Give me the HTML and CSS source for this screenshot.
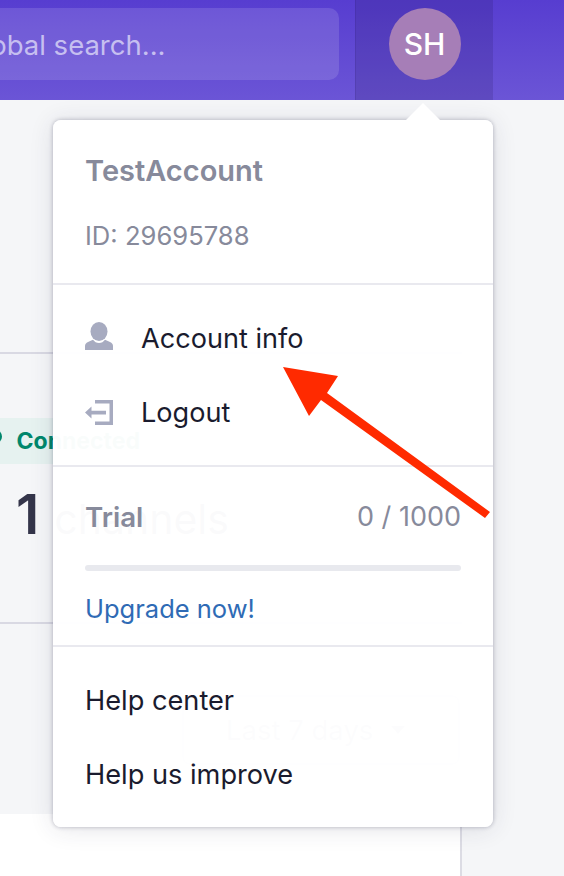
FILE: index.html
```html
<!DOCTYPE html>
<html lang="en">
<head>
<meta charset="utf-8">
<title>Account menu</title>
<link rel="stylesheet" href="styles.css">
</head>
<body>
<div class="page">
  <header class="topbar">
    <div class="search">Global search...</div>
    <div class="account"><div class="avatar">SH</div></div>
  </header>
  <main class="content">
    <section class="panel panel-status">
      <div class="badge"><span class="dot"></span>Connected</div>
      <div class="stat"><span class="stat-prev">5</span><strong>1</strong><span class="stat-label">channels</span></div>
    </section>
    <section class="panel panel-range">
      <div class="range">Last 7 days <span class="caret"></span></div>
    </section>
    <section class="panel-white"></section>
  </main>

  <div class="menu">
    <span class="menu-tip"></span>
    <div class="menu-section menu-head">
      <div class="name">TestAccount</div>
      <div class="muted">ID: 29695788</div>
    </div>
    <div class="menu-section menu-links">
      <a class="item">
        <svg class="icon icon-person" viewBox="0 0 28 28"><ellipse cx="14" cy="9.500" rx="8.500" ry="9.500"/><path d="M0 28v-4c0-2 1-3 3-4l5-2.300c1.500 2 3.500 3.300 6 3.300s4.500-1.300 6-3.300l5 2.300c2 1 3 2 3 4v4z"/></svg>
        Account info
      </a>
      <a class="item">
        <svg class="icon icon-logout" viewBox="0 0 28 25"><path d="M10 0h18v25H10v-3.500h14.500v-18H10z"/><path d="M0 12.500 6.500 6.500v4.200H21v3.800H6.500v4z"/></svg>
        Logout
      </a>
    </div>
    <div class="menu-section menu-plan">
      <div class="plan-row"><strong>Trial</strong><span>0 / 1000</span></div>
      <div class="progress"></div>
      <a class="upgrade">Upgrade now!</a>
    </div>
    <div class="menu-section menu-help">
      <a class="help">Help center</a>
      <a class="help">Help us improve</a>
    </div>
  </div>

  <svg class="annotation" viewBox="0 0 564 876"><path d="M283 367 338 376 327 393 490 512 485 518 321 400 309 416z"/></svg>
</div>
</body>
</html>
```

FILE: styles.css
```css
* { box-sizing: border-box; }
html, body { margin: 0; padding: 0; }
body {
  width: 564px;
  height: 876px;
  overflow: hidden;
  background: #f5f6f8;
  font-family: Inter, "Noto Sans", sans-serif;
  color: #1a1b2e;
}
.page { position: relative; width: 564px; height: 876px; overflow: hidden; }

.topbar {
  display: flex;
  align-items: stretch;
  height: 100px;
  background: linear-gradient(180deg, #573dd0 0%, #6b55d6 100%);
}
.search {
  width: 439px;
  height: 72px;
  margin: 8px 16px 0 -100px;
  padding-left: 63px;
  border-radius: 10px;
  background: rgba(255, 255, 255, 0.13);
  color: #c6bff0;
  font-size: 27.5px;
  line-height: 75px;
  white-space: nowrap;
}
.account {
  width: 138px;
  display: flex;
  justify-content: center;
  padding-top: 8px;
  background: rgba(30, 20, 80, 0.16);
  border-left: 1px solid rgba(30, 20, 80, 0.12);
}
.avatar {
  width: 72px;
  height: 72px;
  border-radius: 50%;
  background: #a67eb7;
  color: #fff;
  font-size: 30px;
  font-weight: 500;
  line-height: 72px;
  text-align: center;
}

.content { width: 462px; }
.panel { border-top: 2px solid #d9d9e3; }
.panel-status { height: 270px; margin-top: 252px; padding-top: 64px; }
.badge {
  display: flex;
  align-items: center;
  gap: 15px;
  height: 46px;
  width: 150px;
  margin-left: -10px;
  background: #e6f2f0;
  color: #00876c;
  font-size: 23px;
  font-weight: 700;
}
.dot { width: 13px; height: 13px; border-radius: 50%; background: #00876c; margin-top: -10px; }
.stat { display: flex; align-items: baseline; margin: 17px 0 0 -33px; font-size: 55px; line-height: 66px; color: #34354a; }
.stat strong { margin-left: 15px; font-weight: 600; }
.stat-prev { width: 34px; font-weight: 600; }
.stat-label { margin-left: 15px; font-size: 41px; font-weight: 400; }
.panel-range { height: 192px; padding: 71px 0 0 182px; }
.range {
  display: flex;
  align-items: center;
  gap: 18px;
  width: 278px;
  height: 70px;
  padding-left: 42px;
  border: 2px solid #d9d9e3;
  border-radius: 8px;
  background: #fff;
  color: #8a8da0;
  font-size: 27.5px;
}
.caret { border: 7px solid transparent; border-top: 8px solid #8a8da0; border-bottom: 0; }
.panel-white {
  height: 63px;
  background: #fff;
  border-right: 2px solid #dcdce4;
}

.menu {
  position: absolute;
  left: 53px;
  top: 120px;
  width: 440px;
  height: 707px;
  border-radius: 8px;
  background: rgba(255, 255, 255, 0.975);
  box-shadow: 0 0 4px rgba(40, 40, 70, 0.32), 0 2px 24px rgba(40, 40, 70, 0.12);
}
.menu-tip {
  position: absolute;
  left: 353px;
  top: -17px;
  width: 0;
  height: 0;
  border: 17px solid transparent;
  border-top: 0;
  border-bottom-color: #fff;
}
.menu-section { padding: 0 32px; border-bottom: 2px solid #e9e9ef; }
.menu-section:last-child { border-bottom: 0; }
.menu-head { height: 165px; padding-top: 31px; }
.name { font-size: 29px; font-weight: 600; line-height: 40px; color: #878a9b; }
.muted { margin-top: 26px; font-size: 25.6px; line-height: 38px; color: #878a9b; }
.menu-links { height: 182px; padding-top: 27px; display: flex; flex-direction: column; gap: 22px; }
.item { display: flex; align-items: center; gap: 28px; height: 52px; font-size: 27.1px; }
.icon { width: 28px; height: 28px; fill: #a7abc0; flex: none; }
.icon-person { margin-top: -4px; }
.icon-logout { height: 25px; }
.menu-plan { height: 180px; padding-top: 30px; }
.plan-row { display: flex; justify-content: space-between; font-size: 27px; line-height: 40px; color: #878a9b; }
.plan-row strong { font-size: 27.7px; font-weight: 600; }
.progress { height: 6px; margin-top: 28px; border-radius: 3px; background: #e8e9ee; }
.upgrade { display: block; margin-top: 18px; font-size: 25.5px; line-height: 40px; color: #2f6bb5; }
.menu-help { padding-top: 34px; }
.help { display: block; font-size: 27.2px; line-height: 40px; margin-bottom: 34px; }

.annotation { position: absolute; inset: 0; width: 564px; height: 876px; pointer-events: none; }
.annotation path { fill: #ff2a00; }
```
